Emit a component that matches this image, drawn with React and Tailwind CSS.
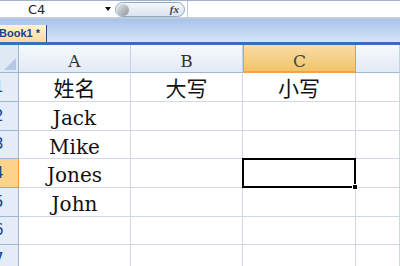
import React from "react";

const COLS = [
    { key: "A", w: "w-[112px]" },
    { key: "B", w: "w-[112px]" },
    { key: "C", w: "w-[113px]" },
    { key: "D", w: "flex-1" },
];

const ROWS = [
    { n: 1, h: "h-[29px]", cells: ["姓名", "大写", "小写", ""] },
    { n: 2, h: "h-[29px]", cells: ["Jack", "", "", ""] },
    { n: 3, h: "h-[28px]", cells: ["Mike", "", "", ""] },
    { n: 4, h: "h-[29px]", cells: ["Jones", "", "", ""] },
    { n: 5, h: "h-[29px]", cells: ["John", "", "", ""] },
    { n: 6, h: "h-[28px]", cells: ["", "", "", ""] },
    { n: 7, h: "h-[29px]", cells: ["", "", "", ""] },
];

function FormulaBar() {
    return (
        <div className="flex h-[19px] border-t border-[#9fb3cd] border-b-2 border-b-[#c6ccd6] bg-white">
            <div className="relative w-[115px] flex items-center">
                <span className="ml-[28px] text-[13px] text-[#222] leading-none" style={{ fontFamily: '"DejaVu Sans", sans-serif' }}>C4</span>
                <svg className="absolute left-[105px] top-[6px]" width="6" height="4" viewBox="0 0 6 4">
                    <path d="M0 0h6L3 4z" fill="#111" />
                </svg>
            </div>
            <div className="w-[70px] h-[15px] mt-[1px] rounded-full border border-[#8fa6c4] bg-gradient-to-b from-[#f4f7fb] to-[#dbe4f0] flex items-center justify-between">
                <div className="w-[12px] h-[12px] ml-[1px] rounded-full bg-gradient-to-br from-[#e8e8e8] via-[#b9bdc2] to-[#8e949b]" />
                <span className="mr-[5px] text-[11px] italic font-bold text-[#444] leading-none" style={{ fontFamily: '"Liberation Serif", serif' }}>fx</span>
            </div>
            <div className="flex-1 border-l border-[#c3cad6] ml-[2px]" />
        </div>
    );
}

function TabBar() {
    return (
        <div className="h-[26px] bg-gradient-to-b from-[#a7c3ec] to-[#d6e4f7] border-b-[3px] border-[#3b6cbf] flex items-end">
            <div className="h-[17px] w-[47px] bg-gradient-to-b from-[#fff4d2] to-[#fcdc97] border-r border-[#2d4e82] flex items-center overflow-hidden">
                <span className="-ml-[1px] text-[11px] font-bold text-[#15428b] whitespace-nowrap leading-none" style={{ fontFamily: '"Liberation Sans", sans-serif' }}>Book1 *</span>
            </div>
        </div>
    );
}

function HeaderRow() {
    return (
        <div className="flex h-[28px]">
            <div className="relative w-[19px] bg-[#dfe8f5] border-r border-b border-[#9eb6ce]">
                <svg className="absolute right-[2px] bottom-[2px]" width="12" height="12" viewBox="0 0 12 12">
                    <path d="M12 0V12H0z" fill="#b4c8e6" />
                </svg>
            </div>
            {COLS.map((c) =>
                c.key === "C" ? (
                    <div key={c.key} className={`${c.w} flex items-center justify-center bg-gradient-to-b from-[#fadca5] to-[#f2c468] border-x border-[#f29a3a] border-b-2 border-b-[#f2a24a]`}>
                        <span className="mt-[6px] leading-none text-[17px] text-[#3c4b3c]" style={{ fontFamily: '"DejaVu Serif", serif' }}>C</span>
                    </div>
                ) : (
                    <div key={c.key} className={`${c.w} flex items-center justify-center bg-gradient-to-b from-[#f6f9fd] to-[#e3eaf5] border-r border-[#c5d2e3] border-b border-b-[#9eb6ce]`}>
                        <span className="mt-[6px] leading-none text-[17px] text-[#333]" style={{ fontFamily: '"DejaVu Serif", serif' }}>{c.key === "D" ? "" : c.key}</span>
                    </div>
                )
            )}
        </div>
    );
}

function Row({ row }) {
    const active = row.n === 4;
    return (
        <div className={`flex ${row.h}`}>
            <div className={`w-[19px] overflow-hidden flex items-center border-r border-b ${active ? "bg-[#fdd28a] border-[#f29a3a]" : "bg-[#e4ecf7] border-[#9eb6ce]"}`}>
                <span className="-ml-[6px] text-[15px] text-[#15428b]" style={{ fontFamily: '"DejaVu Sans", sans-serif' }}>{row.n}</span>
            </div>
            {COLS.map((c, i) => {
                const text = row.cells[i];
                const cjk = /[\u4e00-\u9fff]/.test(text);
                const selected = active && c.key === "C";
                return (
                    <div key={c.key} className={`${c.w} relative flex items-center justify-center border-r border-b border-[#d0d7e5] ${selected ? "z-10" : ""}`}>
                        <span
                            className={cjk ? "text-[21px] text-[#111] mt-[1px]" : "text-[20px] text-[#111] leading-none mt-[4px]"}
                            style={{ fontFamily: cjk ? '"Noto Sans CJK SC", sans-serif' : '"DejaVu Serif", serif' }}
                        >
                            {text}
                        </span>
                        {selected && (
                            <>
                                <div className="absolute -left-[1px] -top-[1px] -right-[1px] -bottom-[1px] border-2 border-black" />
                                <div className="absolute -right-[3px] -bottom-[3px] w-[6px] h-[6px] bg-black border border-white" />
                            </>
                        )}
                    </div>
                );
            })}
        </div>
    );
}

export default function App() {
    return (
        <div className="w-[400px] h-[266px] overflow-hidden bg-white">
            <FormulaBar />
            <TabBar />
            <HeaderRow />
            {ROWS.map((r) => (
                <Row key={r.n} row={r} />
            ))}
        </div>
    );
}
